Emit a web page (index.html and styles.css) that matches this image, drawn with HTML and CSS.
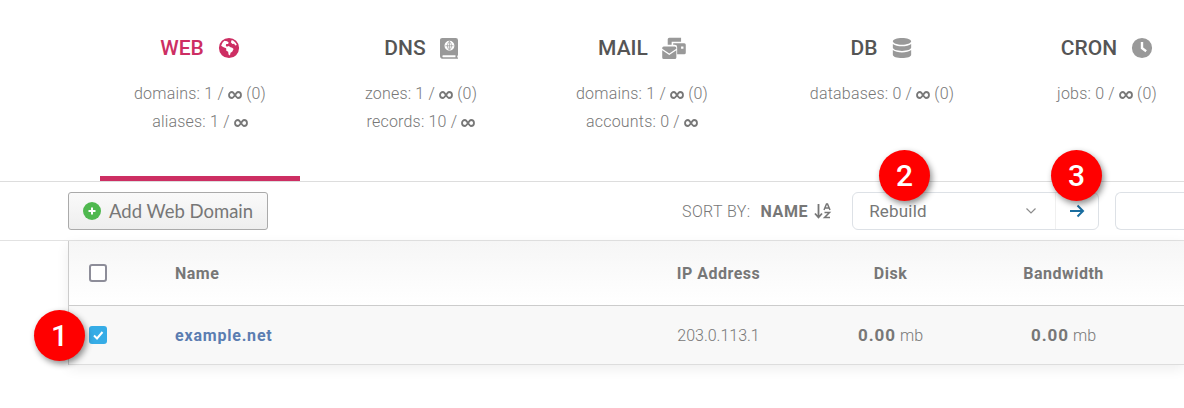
FILE: index.html
```html
<!DOCTYPE html>
<html>

<head>
    <title>Web Domains</title>
    <link rel="stylesheet" href="styles.css">
</head>

<body>
    <svg class="defs" width="0" height="0">
        <symbol id="inf" viewBox="0 0 14 8"><path d="M4 1a3 3 0 0 0 0 6c2 0 4-6 6-6a3 3 0 0 1 0 6c-2 0-4-6-6-6z" fill="none" stroke="#777" stroke-width="1.800"/></symbol>
    </svg>
    <div class="tabs">
        <div class="tab active">
            <h3>WEB
                <svg class="tabIcon" viewBox="0 0 24 24"><path d="M12 1a11 11 0 1 0 0 22 11 11 0 0 0 0-22zM7 4.200l3 .5 1.800 1.500-1 1.300-1.800.2-.5 1.600 1 1.200 2.500-.8 1 1.200 2.500.8 1.500 1.500-1.500 2.800-1.800 1.200-.7 3-1.500-1-.4-3-2-1.300-.2-2.500L5.500 11l-2-1.500C4.300 7.300 5.300 5.500 7 4.200zM15 3.200c2.600.9 4.600 2.900 5.500 5.500l-1.800.6-1-2-2 .2-1.700-1.700z" fill-rule="evenodd"/></svg>
            </h3>
            <p>domains: 1 / <svg class="inf"><use href="#inf"/></svg> (0)</p>
            <p>aliases: 1 / <svg class="inf"><use href="#inf"/></svg></p>
        </div>
        <div class="tab">
            <h3>DNS
                <svg class="tabIcon book" viewBox="0 0 20 24"><path d="M2.500 1h15A2.500 2.500 0 0 1 20 3.500v16c0 .7-.3 1.200-.8 1.500v1.500h.8V24H3.500A3.500 3.500 0 0 1 0 20.500v-17C0 2 1 1 2.500 1zM3.500 20a1.200 1.200 0 0 0 0 2.300h13.700V20zM10.500 4a5.500 5.500 0 1 0 0 11 5.500 5.500 0 0 0 0-11z" fill-rule="evenodd"/><path d="M6 9.500h9M10.500 5v9M10.500 4.500c-3 3-3 7 0 10M10.500 4.500c3 3 3 7 0 10" fill="none" stroke="#9a9a9a" stroke-width=".8"/></svg>
            </h3>
            <p>zones: 1 / <svg class="inf"><use href="#inf"/></svg> (0)</p>
            <p>records: 10 / <svg class="inf"><use href="#inf"/></svg></p>
        </div>
        <div class="tab">
            <h3>MAIL
                <svg class="tabIcon wide" viewBox="0 0 30 28"><path d="M9 1h15v5H12v4H7V3a2 2 0 0 1 2-2zM14 8h14a2 2 0 0 1 2 2v10a2 2 0 0 1-2 2H19v-9a3 3 0 0 0-3-3h-2zM24 12v3h3v-3z" fill-rule="evenodd"/><path d="M2 12h14a2 2 0 0 1 2 2v1l-9 6-9-6v-1a2 2 0 0 1 2-2zM0 17l9 6 9-6v9a2 2 0 0 1-2 2H2a2 2 0 0 1-2-2z"/></svg>
            </h3>
            <p>domains: 1 / <svg class="inf"><use href="#inf"/></svg> (0)</p>
            <p>accounts: 0 / <svg class="inf"><use href="#inf"/></svg></p>
        </div>
        <div class="tab">
            <h3>DB
                <svg class="tabIcon" viewBox="0 0 24 24"><path d="M12 1c5.500 0 10 1.700 10 3.700S17.500 8.500 12 8.500 2 6.700 2 4.700 6.500 1 12 1zM2 7.500c2 1.800 6 2.600 10 2.600s8-.8 10-2.600v4c0 2-4.500 3.700-10 3.700S2 13.500 2 11.500zM2 14.300c2 1.800 6 2.600 10 2.600s8-.8 10-2.600v5c0 2-4.500 3.700-10 3.700S2 21.300 2 19.300z"/></svg>
            </h3>
            <p>databases: 0 / <svg class="inf"><use href="#inf"/></svg> (0)</p>
        </div>
        <div class="tab lastTab">
            <h3>CRON
                <svg class="tabIcon" viewBox="0 0 24 24"><path d="M12 1a11 11 0 1 0 0 22 11 11 0 0 0 0-22zM10.700 5.500h2.600v6l4 3-1.500 2-5.100-3.800z" fill-rule="evenodd"/></svg>
            </h3>
            <p>jobs: 0 / <svg class="inf"><use href="#inf"/></svg> (0)</p>
        </div>
    </div>

    <div class="toolbar">
        <button class="addBtn">
            <svg class="plusIcon" viewBox="0 0 18 18"><circle cx="9" cy="9" r="9" fill="#4fb84f"/><path d="M9 5.500v7M5.500 9h7" stroke="#fff" stroke-width="2"/></svg>
            Add Web Domain
        </button>
        <div class="toolbarRight">
            <span class="sortLabel">SORT BY:</span>
            <b class="sortName">NAME</b>
            <svg class="sortIcon" viewBox="0 0 18 16"><path d="M4.500 1v13M1 10.500 4.500 14.500 8 10.500" fill="none" stroke="#777" stroke-width="1.800"/><path d="M10 7l2.500-6h1L16 7M11 5h4M10.500 9.500h5L10.500 14.500h5.500" fill="none" stroke="#777" stroke-width="1.500"/></svg>
            <div class="bulk">
                <div class="bulkSelect">Rebuild
                    <svg class="chevron" viewBox="0 0 12 8"><path d="M1.500 1.500 6 6l4.500-4.500" fill="none" stroke="#8c8c8c" stroke-width="1.200"/></svg>
                </div>
                <div class="bulkGo">
                    <svg class="goArrow" viewBox="0 0 16 14"><path d="M1 7h13M8.500 1.500 14 7l-5.500 5.500" fill="none" stroke="#1a6d9f" stroke-width="2"/></svg>
                </div>
            </div>
            <div class="search"></div>
        </div>
    </div>

    <div class="tableWrap">
        <div class="tableRow tableHead">
            <div class="colCheck"><span class="check"></span></div>
            <div class="colName">Name</div>
            <div class="colIp">IP Address</div>
            <div class="colDisk">Disk</div>
            <div class="colBand">Bandwidth</div>
        </div>
        <div class="tableRow tableBody">
            <div class="colCheck">
                <span class="check checked">
                    <svg viewBox="0 0 12 12"><path d="M2 6.500 5 9.500 10.500 3" fill="none" stroke="#fff" stroke-width="2"/></svg>
                </span>
            </div>
            <div class="colName"><a class="domain">example.net</a></div>
            <div class="colIp">203.0.113.1</div>
            <div class="colDisk"><b>0.00</b> mb</div>
            <div class="colBand"><b>0.00</b> mb</div>
        </div>
    </div>

    <div class="badge badge1">1</div>
    <div class="badge badge2">2</div>
    <div class="badge badge3">3</div>
</body>

</html>
```

FILE: styles.css
```css
html,
body {
    height: 408px;
    overflow: hidden;
}

body {
    margin: 0;
    position: relative;
    background: #fff;
    font-family: "Roboto", "Liberation Sans", sans-serif;
    font-size: 16px;
    color: #777;
}

.defs {
    display: block;
    height: 0;
}

.tabs {
    display: grid;
    grid-template-columns: 200px 200px 200px 238px 162px;
    column-gap: 21px;
    height: 181px;
    padding-left: 100px;
    border-bottom: 1px solid #ddd;
}

.tab {
    height: 181px;
    box-sizing: border-box;
    padding-top: 36px;
    text-align: center;
    white-space: nowrap;
}

.tab.active {
    border-bottom: 5px solid #cd2e63;
}

.tab.lastTab {
    padding-left: 8px;
}

.tab h3 {
    margin: 0 0 20px;
    height: 24px;
    display: flex;
    justify-content: center;
    align-items: center;
    gap: 14px;
    font-size: 21px;
    line-height: 24px;
    font-weight: 500;
    color: #555;
}

.tab.active h3 {
    color: #cd2e63;
}

.tabIcon {
    width: 22px;
    height: 22px;
    fill: #999;
}

.tabIcon.book {
    width: 18px;
}

.tabIcon.wide {
    width: 24px;
}

.tab.active .tabIcon {
    fill: #cd2e63;
}

.tab p {
    margin: 0;
    font-size: 16px;
    font-weight: 300;
    line-height: 28px;
    letter-spacing: .2px;
    color: #777;
}

.inf {
    width: 14px;
    height: 8px;
    vertical-align: 0;
}

.toolbar {
    display: flex;
    align-items: center;
    height: 58px;
    padding-left: 68px;
    border-bottom: 1px solid #e2e2e2;
}

.addBtn {
    display: flex;
    align-items: center;
    gap: 8px;
    width: 200px;
    height: 38px;
    margin: 0;
    padding: 0 14px;
    flex: none;
    border: 1px solid #aaa;
    border-radius: 3px;
    background: linear-gradient(#fafafa, #eee);
    font-family: "Lato", sans-serif;
    font-size: 18.500px;
    color: #777;
    white-space: nowrap;
}

.plusIcon {
    width: 18px;
    height: 18px;
    flex: none;
}

.toolbarRight {
    display: flex;
    align-items: center;
    width: 502px;
    margin-left: 414px;
    flex: none;
    white-space: nowrap;
}

.sortLabel {
    font-size: 16px;
    font-weight: 300;
    letter-spacing: .4px;
}

.sortName {
    margin-left: 10px;
    font-size: 16px;
    letter-spacing: .6px;
}

.sortIcon {
    width: 18px;
    height: 16px;
    margin-left: 6px;
    flex: none;
}

.bulk {
    display: flex;
    width: 245px;
    height: 36px;
    margin-left: 20px;
    flex: none;
    border: 1px solid #dde1e6;
    border-radius: 6px;
}

.bulkSelect {
    flex: 1;
    display: flex;
    align-items: center;
    justify-content: space-between;
    padding: 0 18px 0 16px;
    font-size: 17px;
    letter-spacing: .2px;
    border-right: 1px solid #f0f0f0;
}

.chevron {
    width: 12px;
    height: 8px;
}

.bulkGo {
    width: 42px;
    display: flex;
    align-items: center;
    justify-content: center;
}

.goArrow {
    width: 16px;
    height: 14px;
}

/* runs off the right edge of the window, so no right side */
.search {
    flex: 1;
    height: 36px;
    margin-left: 16px;
    border: 1px solid #dde1e6;
    border-right: 0;
    border-radius: 6px 0 0 6px;
}

.tableWrap {
    margin-left: 68px;
    border-left: 1px solid #ccc;
    box-shadow: 0 4px 12px rgba(0, 0, 0, 0.07);
}

.tableRow {
    display: grid;
    grid-template-columns: 106px 473px 141px 203px 143px 1fr;
    align-items: center;
}

.tableHead {
    height: 64px;
    background: linear-gradient(#f6f6f6, #fff);
    border-bottom: 1px solid #ccc;
    font-size: 16px;
    font-weight: 700;
    letter-spacing: .5px;
}

.tableBody {
    height: 58px;
    background: #f8f8f8;
    border-bottom: 1px solid #ddd;
    font-weight: 300;
}

.colCheck {
    padding-left: 20px;
    display: flex;
}

.colIp,
.colDisk,
.colBand {
    text-align: center;
    white-space: nowrap;
}

.tableBody b {
    font-size: 17px;
    font-weight: 700;
    letter-spacing: 1px;
}

.check {
    display: block;
    width: 18px;
    height: 18px;
    box-sizing: border-box;
    border: 2px solid #8d8d99;
    border-radius: 3px;
    background: #fff;
}

.check.checked {
    border: 0;
    background: #36ace6;
    padding: 3px;
}

.check svg {
    display: block;
}

.domain {
    color: #5b7db1;
    font-size: 16px;
    font-weight: 700;
    letter-spacing: .8px;
}

.badge {
    position: absolute;
    width: 51px;
    height: 51px;
    border-radius: 50%;
    background: #f00;
    color: #fff;
    font-family: "Roboto", sans-serif;
    font-size: 30px;
    font-weight: 500;
    line-height: 51px;
    text-align: center;
    box-shadow: 2px 3px 6px rgba(0, 0, 0, 0.45);
}

.badge1 {
    left: 34px;
    top: 310px;
}

.badge2 {
    left: 879px;
    top: 150px;
}

.badge3 {
    left: 1051px;
    top: 150px;
}
```
